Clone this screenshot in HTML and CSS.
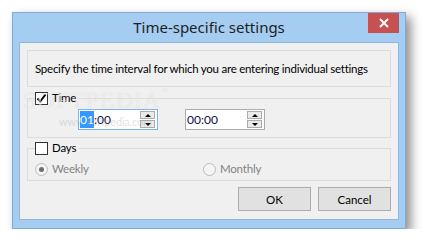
FILE: index.html
```html
<!DOCTYPE html>
<html lang="en">
<head>
    <meta charset="UTF-8">
    <meta name="viewport" content="width=device-width, initial-scale=1.0">
    <title>Time-specific settings</title>
    <link rel="stylesheet" href="styles.css">
</head>
<body>
    <div class="window">
        <div class="titlebar">
            <span class="title">Time-specific settings</span>
            <button type="button" class="close" aria-label="Close">
                <svg width="10" height="10" viewBox="0 0 10 10">
                    <path d="M1 1 L9 9 M9 1 L1 9" stroke="#ffffff" stroke-width="2"/>
                </svg>
            </button>
        </div>
        <div class="client">
            <div class="intro">Specify the time interval for which you are entering individual settings</div>

            <fieldset class="group">
                <legend><span class="check checked"><svg width="11" height="11" viewBox="0 0 11 11"><path d="M1.5 5.5 L4.2 8.5 L9.5 1.5" fill="none" stroke="#000" stroke-width="2"/></svg></span>Time</legend>
                <div class="times">
                    <div class="spin focus">
                        <span class="value"><span class="sel">01</span>:00</span>
                        <span class="arrows"><span class="arrow up"></span><span class="arrow down"></span></span>
                    </div>
                    <div class="spin">
                        <span class="value">00:00</span>
                        <span class="arrows"><span class="arrow up"></span><span class="arrow down"></span></span>
                    </div>
                </div>
            </fieldset>

            <fieldset class="group days">
                <legend><span class="check"></span>Days</legend>
                <div class="radios">
                    <label class="radio on"><span class="dot"></span>Weekly</label>
                    <label class="radio"><span class="dot"></span>Monthly</label>
                </div>
            </fieldset>

            <div class="buttons">
                <button type="button" class="btn">OK</button>
                <button type="button" class="btn">Cancel</button>
            </div>
        </div>
        <div class="watermark">SOFTPEDIA<span class="tm">™</span></div>
        <div class="watermark-url">www.softpedia.com</div>
    </div>
</body>
</html>
```

FILE: styles.css
```css
body {
    margin: 0;
    padding: 12px 0 0 12px;
    background-color: #ffffff;
    font-family: Lato, "Noto Sans", sans-serif;
    font-size: 11.5px;
    letter-spacing: -0.2px;
    color: #000000;
}
.window {
    position: relative;
    width: 392px;
    height: 215px;
    display: flex;
    flex-direction: column;
    background-color: #a5cdf1;
    border: 1px solid #82aad6;
    box-shadow: 5px 5px 10px rgba(0, 0, 0, 0.45);
}
.titlebar {
    height: 29px;
    display: grid;
    grid-template-columns: 1fr auto 1fr;
}
.title {
    grid-column: 2;
    font-family: "Noto Sans", sans-serif;
    font-size: 15px;
    letter-spacing: 0;
    line-height: 29px;
    color: #1e1e1e;
}
.close {
    grid-column: 3;
    justify-self: end;
    align-self: start;
    width: 31px;
    height: 20px;
    margin-right: 6px;
    padding: 0;
    border: none;
    background-color: #c75050;
    display: flex;
    align-items: center;
    justify-content: center;
}
.client {
    flex: 1;
    margin: 0 6px 8px 6px;
    padding: 7px 7px 0 7px;
    background-color: #f0f0f0;
    border: 1px solid #8fb6df;
    display: flex;
    flex-direction: column;
}
.intro {
    height: 35px;
    line-height: 35px;
    padding-left: 7px;
    border: 1px solid #dcdcdc;
    letter-spacing: -0.25px;
    white-space: nowrap;
}
.group {
    margin: 4px 0 0 0;
    padding: 0;
    border: 1px solid #dcdcdc;
}
.group legend {
    margin-left: 7px;
    padding: 0 3px 0 0;
    display: flex;
    align-items: center;
    gap: 4px;
    line-height: 14px;
}
.check {
    width: 11px;
    height: 11px;
    border: 1px solid #333333;
    background-color: #ffffff;
    display: flex;
}
.times {
    display: flex;
    gap: 27px;
    padding: 4px 0 7px 50px;
}
.spin {
    width: 78px;
    height: 19px;
    display: flex;
    align-items: center;
    justify-content: space-between;
    border: 1px solid #abadb3;
    background-color: #ffffff;
}
.spin.focus {
    border-color: #7eb4ea;
}
.value {
    padding-left: 1px;
    font-size: 12px;
    letter-spacing: 0;
    color: #10104a;
}
.sel {
    background-color: #3399ff;
    color: #ffffff;
    padding: 1px 0;
}
.arrows {
    display: flex;
    flex-direction: column;
    gap: 1px;
    margin-right: 2px;
}
.arrow {
    width: 13px;
    height: 6px;
    border: 1px solid #acacac;
    background-color: #eaeaea;
    display: flex;
    align-items: center;
    justify-content: center;
}
.arrow::after {
    content: "";
    border-left: 3px solid transparent;
    border-right: 3px solid transparent;
}
.arrow.up::after {
    border-bottom: 3px solid #000000;
}
.arrow.down::after {
    border-top: 3px solid #000000;
}
.days {
    margin-top: 3px;
}
.radios {
    display: flex;
    padding: 7px 0 4px 7px;
}
.radio {
    width: 168px;
    display: flex;
    align-items: center;
    gap: 4px;
    color: #838383;
    line-height: 14px;
}
.dot {
    width: 11px;
    height: 11px;
    border: 1px solid #bcbcbc;
    border-radius: 50%;
    background-color: #f4f4f4;
    display: flex;
    align-items: center;
    justify-content: center;
}
.radio.on .dot::after {
    content: "";
    width: 5px;
    height: 5px;
    border-radius: 50%;
    background-color: #6e6e6e;
}
.buttons {
    display: flex;
    justify-content: flex-end;
    gap: 7px;
    margin-top: 6px;
}
.btn {
    width: 73px;
    height: 24px;
    padding: 0;
    border: 1px solid #adadad;
    background-color: #e1e1e1;
    font-family: Lato, "Noto Sans", sans-serif;
    font-size: 11.5px;
    color: #000000;
}
.watermark {
    position: absolute;
    left: 10px;
    top: 74px;
    font-family: "Liberation Serif", serif;
    font-size: 24px;
    letter-spacing: 1px;
    color: rgba(255, 255, 255, 0.55);
    text-shadow: 0 0 1px rgba(0, 0, 0, 0.12);
    pointer-events: none;
}
.watermark .tm {
    font-size: 8px;
    vertical-align: top;
}
.watermark-url {
    position: absolute;
    left: 46px;
    top: 102px;
    font-size: 11px;
    color: rgba(150, 150, 150, 0.3);
    pointer-events: none;
}
```
